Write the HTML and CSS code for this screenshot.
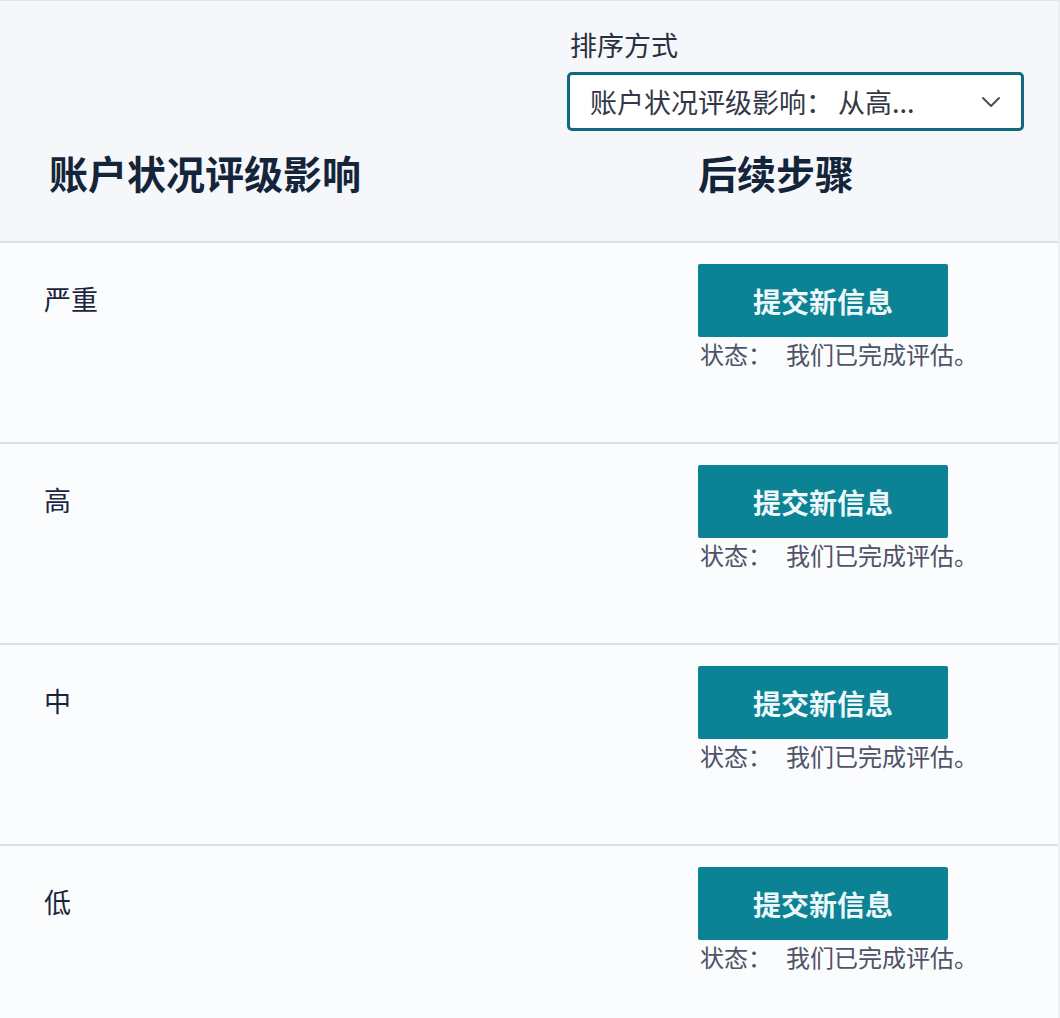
FILE: index.html
```html
<!DOCTYPE html>
<html lang="zh-CN">
<head>
<meta charset="utf-8">
<title>账户状况评级影响</title>
<link rel="stylesheet" href="styles.css">
</head>
<body>
<div class="page">
  <div class="header">
    <div class="sort">
      <div class="sort-label">排序方式</div>
      <div class="select">
        <span class="select-text">账户状况评级影响：<span class="sel-val">从高...</span></span>
        <svg class="chev" width="20" height="12" viewBox="0 0 20 12"><path d="M2 2 L10 10 L18 2" fill="none" stroke="#4a5060" stroke-width="2" stroke-linecap="round" stroke-linejoin="round"/></svg>
      </div>
    </div>
    <div class="head-cols">
      <div class="h-col1">账户状况评级影响</div>
      <div class="h-col2">后续步骤</div>
    </div>
  </div>
  <div class="row">
    <div class="level">严重</div>
    <div class="action">
      <div class="btn">提交新信息</div>
      <div class="status"><span class="st-k">状态：</span>我们已完成评估。</div>
    </div>
  </div>
  <div class="row">
    <div class="level">高</div>
    <div class="action">
      <div class="btn">提交新信息</div>
      <div class="status"><span class="st-k">状态：</span>我们已完成评估。</div>
    </div>
  </div>
  <div class="row">
    <div class="level">中</div>
    <div class="action">
      <div class="btn">提交新信息</div>
      <div class="status"><span class="st-k">状态：</span>我们已完成评估。</div>
    </div>
  </div>
  <div class="row">
    <div class="level">低</div>
    <div class="action">
      <div class="btn">提交新信息</div>
      <div class="status"><span class="st-k">状态：</span>我们已完成评估。</div>
    </div>
  </div>
</div>
</body>
</html>
```
FILE: styles.css
```css
* { box-sizing: border-box; }
html, body {
  margin: 0;
  padding: 0;
  background: #fbfcfe;
}
body {
  font-family: "Noto Sans CJK SC", "Noto Sans", sans-serif;
  color: #1c2540;
}
.page {
  width: 1060px;
  border-top: 1px solid #e4e6ea;
  border-right: 2px solid #eceef2;
}
.header {
  background: #f6f7fa;
  border-bottom: 2px solid #dcdfe3;
  height: 242px;
  padding-top: 27px;
}
.sort {
  margin-left: 567px;
  width: 457px;
}
.sort-label {
  font-size: 27px;
  line-height: 34px;
  color: #2a3040;
  padding-left: 3px;
}
.select {
  margin-top: 10px;
  height: 59px;
  border: 3px solid #10697f;
  border-radius: 5px;
  background: #ffffff;
  display: flex;
  align-items: center;
  justify-content: space-between;
  padding: 0 20px 0 20px;
}
.select-text {
  font-size: 27px;
  color: #323846;
  white-space: nowrap;
}
.sel-val { margin-left: 5px; }
.chev { display: block; }
.head-cols {
  display: grid;
  grid-template-columns: 649px 1fr;
  padding-left: 49px;
  margin-top: 17px;
}
.h-col1, .h-col2 {
  font-size: 39px;
  line-height: 48px;
  font-weight: 700;
  color: #14253a;
}
.row {
  display: grid;
  grid-template-columns: 654px 1fr;
  padding-left: 44px;
  padding-top: 21px;
  height: 201px;
  border-bottom: 2px solid #dcdfe3;
}
.level {
  font-size: 27px;
  line-height: 70px;
  color: #1c2540;
}
.btn {
  width: 250px;
  height: 73px;
  background: #0b8395;
  border-radius: 2px;
  color: #eef8fa;
  font-size: 28px;
  font-weight: 700;
  display: flex;
  align-items: center;
  justify-content: center;
}
.status {
  margin-top: 2px;
  padding-left: 2px;
  font-size: 24px;
  line-height: 30px;
  color: #4e5366;
  white-space: nowrap;
}
.st-k { margin-right: 14px; }
```
